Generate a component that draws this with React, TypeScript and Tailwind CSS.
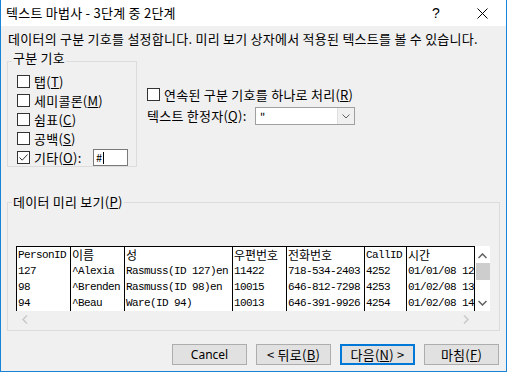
import React from "react";

const ui = { fontFamily: '"Noto Sans CJK KR", "Noto Sans", sans-serif' };
const mono = { fontFamily: '"Liberation Mono", "Noto Sans CJK KR", monospace' };

function Box({ checked = false }: { checked?: boolean }) {
  return (
    <span className="flex h-[13px] w-[13px] shrink-0 items-center justify-center border border-[#333] bg-white">
      {checked && (
        <svg width="11" height="11" viewBox="0 0 11 11">
          <path d="M1.5 5.5 L4.2 8.2 L9.5 2.5" fill="none" stroke="#333" strokeWidth="1" />
        </svg>
      )}
    </span>
  );
}

function Check({ label, keyChar }: { label: string; keyChar: string }) {
  return (
    <div className="flex h-[19px] items-center gap-[4px]">
      <Box />
      <span className="leading-[16px]">
        {label}(<u>{keyChar}</u>)
      </span>
    </div>
  );
}

const cols = [54, 54, 108, 54, 78, 42, 68];
const rows = [
  ["PersonID", "이름", "성", "우편번호", "전화번호", "CallID", "시간"],
  ["127", "^Alexia", "Rasmuss(ID 127)en", "11422", "718-534-2403", "4252", "01/01/08 12"],
  ["98", "^Brenden", "Rasmuss(ID 98)en", "10015", "646-812-7298", "4253", "01/02/08 13"],
  ["94", "^Beau", "Ware(ID 94)", "10013", "646-391-9926", "4254", "01/02/08 14"],
];

function Cell({ text, w }: { text: string; w: number }) {
  const korean = /[가-힣]/.test(text);
  return (
    <div
      className="h-[16px] shrink-0 overflow-hidden whitespace-nowrap border-r border-black pl-[1px] leading-[16px] tracking-normal"
      style={{ width: w }}
    >
      {korean ? (
        <span className="text-[12px]" style={ui}>{text}</span>
      ) : (
        <span className="text-[11px] tracking-[-0.6px]">{text}</span>
      )}
    </div>
  );
}

function Btn({ children, primary }: { children: React.ReactNode; primary?: boolean }) {
  return (
    <div
      className={
        "flex h-[21px] w-[75px] items-center justify-center bg-[#e1e1e1] leading-[16px] " +
        (primary ? "border-2 border-[#0078d7]" : "border border-[#adadad]")
      }
    >
      {children}
    </div>
  );
}

export default function App() {
  return (
    <div
      className="flex h-[372px] w-[507px] flex-col border-x border-b border-[#1883d7] bg-[#f0f0f0] text-[13px] tracking-[0.25px] text-black"
      style={ui}
    >
      <div className="flex h-[26px] shrink-0 items-center bg-white pl-[5px]">
        <span className="leading-[16px]">텍스트 마법사 - 3단계 중 2단계</span>
        <span className="ml-auto mr-[37px] text-[14px] leading-[15px]" style={{ fontFamily: '"Liberation Sans", sans-serif' }}>?</span>
        <svg width="11" height="11" viewBox="0 0 11 11" className="mr-[18px]">
          <path d="M0.5 0.5 L10.5 10.5 M10.5 0.5 L0.5 10.5" stroke="#000" strokeWidth="1" />
        </svg>
      </div>

      <div className="flex flex-1 flex-col px-[6px]">
        <div className="mt-[5px] pl-[1px] leading-[16px]">
          데이터의 구분 기호를 설정합니다. 미리 보기 상자에서 적용된 텍스트를 볼 수 있습니다.
        </div>

        <div className="mt-[14px] flex">
          <div className="relative h-[106px] w-[130px] shrink-0 border border-[#dcdcdc] pl-[9px] pt-[10px]">
            <span className="absolute -top-[12px] left-[4px] bg-[#f0f0f0] px-[1px] leading-[16px]">구분 기호</span>
            <Check label="탭" keyChar="T" />
            <Check label="세미콜론" keyChar="M" />
            <Check label="쉼표" keyChar="C" />
            <Check label="공백" keyChar="S" />
            <div className="flex h-[19px] items-center gap-[4px]">
              <Box checked />
              <span className="w-[55px] leading-[16px]">
                기타(<u>O</u>):
              </span>
              <div className="flex h-[17px] w-[35px] items-center border border-[#7a7a7a] bg-white pl-[2px] text-[11px]">
                #<span className="ml-[1px] h-[12px] w-[1px] bg-black" />
              </div>
            </div>
          </div>

          <div className="ml-[10px] flex flex-col pt-[25px]">
            <div className="flex h-[17px] items-center gap-[4px]">
              <Box />
              <span className="leading-[16px]">
                연속된 구분 기호를 하나로 처리(<u>R</u>)
              </span>
            </div>
            <div className="mt-[4px] flex items-center">
              <span className="w-[108px] leading-[16px]">
                텍스트 한정자(<u>Q</u>):
              </span>
              <div className="flex h-[18px] w-[100px] items-center border border-[#a0a0a0] bg-white">
                <span className="flex-1 pl-[4px] text-[11px] leading-[15px]">"</span>
                <div className="flex h-full w-[17px] items-center justify-center border-l border-[#e0e0e0] bg-[#f0f0f0]">
                  <svg width="8" height="5" viewBox="0 0 8 5">
                    <path d="M0.5 0.5 L4 4 L7.5 0.5" fill="none" stroke="#606060" strokeWidth="1" />
                  </svg>
                </div>
              </div>
            </div>
          </div>
        </div>

        <div className="relative mt-[35px] h-[129px] w-[493px] border border-[#dcdcdc] pl-[8px] pt-[43px]">
          <span className="absolute -top-[9px] left-[4px] bg-[#f0f0f0] px-[1px] leading-[16px]">
            데이터 미리 보기(<u>P</u>)
          </span>
          <div className="flex w-[474px] flex-col">
            <div className="flex bg-white">
              <div className="flex flex-col border-l border-t border-black" style={mono}>
                {rows.map((r, i) => (
                  <div key={i} className="flex">
                    {r.map((t, j) => (
                      <Cell key={j} text={t} w={cols[j]} />
                    ))}
                  </div>
                ))}
              </div>
              <div className="flex w-[16px] flex-col items-center">
                <svg width="9" height="6" viewBox="0 0 9 6" className="mt-[7px]">
                  <path d="M0.5 5 L4.5 1 L8.5 5" fill="none" stroke="#606060" strokeWidth="1.5" />
                </svg>
                <div className="mt-[4px] h-[17px] w-[14px] bg-[#cdcdcd]" />
                <svg width="9" height="6" viewBox="0 0 9 6" className="mt-[20px]">
                  <path d="M0.5 1 L4.5 5 L8.5 1" fill="none" stroke="#606060" strokeWidth="1.5" />
                </svg>
              </div>
            </div>
            <div className="flex h-[17px] items-center justify-between pl-[6px] pr-[21px]">
              <svg width="6" height="9" viewBox="0 0 6 9">
                <path d="M5 0.5 L1 4.5 L5 8.5" fill="none" stroke="#c8c8c8" strokeWidth="1.5" />
              </svg>
              <svg width="6" height="9" viewBox="0 0 6 9">
                <path d="M1 0.5 L5 4.5 L1 8.5" fill="none" stroke="#c8c8c8" strokeWidth="1.5" />
              </svg>
            </div>
          </div>
        </div>

        <div className="mt-[13px] flex justify-end gap-[9px] pr-[1px]">
          <Btn>
            <span className="text-[12px] tracking-normal" style={{ fontFamily: '"Noto Sans", sans-serif' }}>Cancel</span>
          </Btn>
          <Btn>
            &lt; 뒤로(<u>B</u>)
          </Btn>
          <Btn primary>
            다음(<u>N</u>) &gt;
          </Btn>
          <Btn>
            마침(<u>F</u>)
          </Btn>
        </div>
      </div>
    </div>
  );
}
